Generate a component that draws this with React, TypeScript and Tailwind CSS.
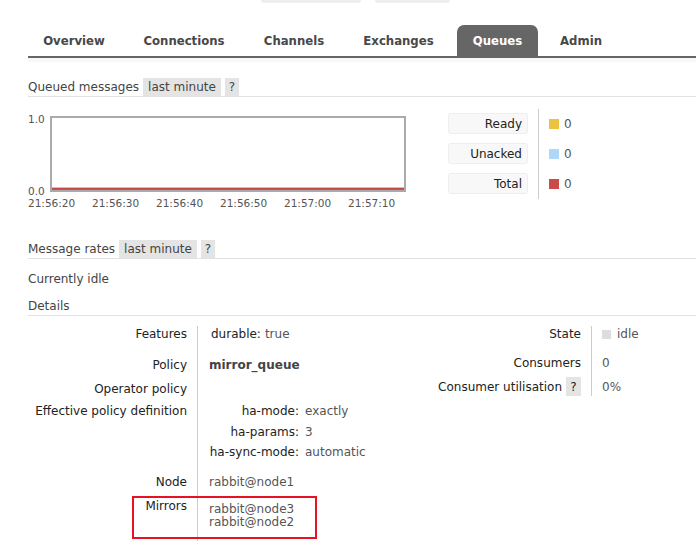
import React from 'react';

// Tabs across the top of the management UI
const tabs = [
  { label: 'Overview', width: 'w-[92px]' },
  { label: 'Connections', width: 'w-[114px]' },
  { label: 'Channels', width: 'w-[92px]' },
  { label: 'Exchanges', width: 'w-[103px]' },
  { label: 'Queues', width: 'w-[81px]', active: true },
  { label: 'Admin', width: 'w-[72px]' },
];

const timeLabels = ['21:56:20', '21:56:30', '21:56:40', '21:56:50', '21:57:00', '21:57:10'];

const legend = [
  { label: 'Ready', color: 'bg-[#edc240]', value: '0' },
  { label: 'Unacked', color: 'bg-[#afd8f8]', value: '0' },
  { label: 'Total', color: 'bg-[#cb4b4b]', value: '0' },
];

const policyDef = [
  { key: 'ha-mode:', value: 'exactly', h: 'h-[21px]' },
  { key: 'ha-params:', value: '3', h: 'h-[20px]' },
  { key: 'ha-sync-mode:', value: 'automatic', h: 'h-[20px]' },
];

const SectionHeader: React.FC<{ title: string }> = ({ title }) => (
  <div className="ml-[28px] flex h-[19px] items-start border-b border-[#e2e2e2]">
    <span className="leading-[18px] text-[#444]">{title}</span>
    <span className="ml-[4px] flex h-[18px] items-center bg-[#e4e4e4] px-[5px] text-[#444]">last minute</span>
    <span className="ml-[4px] flex h-[18px] w-[14px] items-center justify-center bg-[#e4e4e4] text-[#444]">?</span>
  </div>
);

const App: React.FC = () => {
  return (
    <div className="relative h-[552px] w-[696px] overflow-hidden bg-white font-['DejaVu_Sans',sans-serif] text-[12px] text-[#222]">
      {/* bottom edges of the buttons above the fold */}
      <div className="flex h-[3px]">
        <div className="ml-[261px] w-[100px] rounded-b-[4px] bg-[#eeeeee]" />
        <div className="ml-[14px] w-[75px] rounded-b-[4px] bg-[#eeeeee]" />
      </div>

      {/* Menu */}
      <div className="ml-[28px] mt-[22px] flex h-[33px] items-end border-b-2 border-[#666]">
        {tabs.map((t, i) => (
          <div
            key={t.label}
            className={`flex h-[31px] items-center justify-center rounded-t-[7px] font-['DejaVu_Sans_Condensed','DejaVu_Sans',sans-serif] text-[13px] font-bold [font-stretch:condensed] ${t.width} ${i > 0 ? 'ml-[7px]' : ''} ${t.active ? 'bg-[#666] text-white' : 'text-[#484848]'}`}
          >
            {t.label}
          </div>
        ))}
      </div>
      <div className="ml-[28px] h-[4px] bg-[#f8f8f8]" />

      {/* Queued messages */}
      <div className="mt-[16px]">
        <SectionHeader title="Queued messages" />
      </div>

      <div className="ml-[28px] mt-[12px] flex h-[101px] items-start">
        {/* chart */}
        <div className="mt-[4px] w-[378px] flex-none">
          <div className="flex">
            <div className="flex h-[84px] w-[22px] flex-col justify-between text-[10.5px] leading-[12px] text-[#545454]">
              <span>1.0</span>
              <span>0.0</span>
            </div>
            <div className="mt-[3px] flex h-[76px] w-[356px] flex-col justify-end border-2 border-[#aaa]">
              <div className="h-[1px] bg-[#e6b3b3]" />
              <div className="h-[2px] bg-[#cb4b4b]" />
            </div>
          </div>
          <div className="flex text-[10.5px] leading-[13px] text-[#545454]">
            {timeLabels.map(l => (
              <span key={l} className="w-[64px] flex-none">{l}</span>
            ))}
          </div>
        </div>

        {/* legend */}
        <div className="ml-[42px] flex h-[90px]">
          <div className="flex flex-col gap-[9px] border-r border-[#ccc] pr-[10px] pt-[4px]">
            {legend.map(l => (
              <div
                key={l.label}
                className="flex h-[21px] w-[80px] items-center justify-end rounded-[3px] border border-[#eeeeee] bg-[#f8f8f8] pr-[5px]"
              >
                {l.label}
              </div>
            ))}
          </div>
          <div className="flex flex-col gap-[9px] pl-[10px] pt-[4px]">
            {legend.map(l => (
              <div key={l.label} className="flex h-[21px] items-center text-[#555]">
                <span className={`h-[10px] w-[10px] ${l.color}`} />
                <span className="ml-[5px]">{l.value}</span>
              </div>
            ))}
          </div>
        </div>
      </div>

      {/* Message rates */}
      <div className="mt-[30px]">
        <SectionHeader title="Message rates" />
      </div>
      <div className="ml-[28px] mt-[12px] leading-[16px] text-[#444]">Currently idle</div>
      <div className="ml-[28px] mt-[11px] border-b border-[#e2e2e2] pb-[1px] leading-[16px] text-[#444]">Details</div>

      {/* Details tables */}
      <div className="ml-[28px] mt-[10px] flex items-start">
        <div className="w-[400px] flex-none">
          <div className="flex h-[31px]">
            <div className="w-[170px] border-r border-[#ccc] pr-[10px] text-right leading-[16px]">Features</div>
            <div className="pl-[13px] leading-[16px]">
              durable:<span className="ml-[4px] text-[#555]">true</span>
            </div>
          </div>
          <div className="flex h-[24px]">
            <div className="w-[170px] border-r border-[#ccc] pr-[10px] text-right leading-[16px]">Policy</div>
            <div className="pl-[11px] font-bold leading-[16px] text-[#444]">mirror_queue</div>
          </div>
          <div className="flex h-[22px]">
            <div className="w-[170px] border-r border-[#ccc] pr-[10px] text-right leading-[16px]">Operator policy</div>
          </div>
          <div className="flex h-[71px]">
            <div className="w-[170px] border-r border-[#ccc] pr-[10px] text-right leading-[16px]">Effective policy definition</div>
            <div className="pl-[11px] leading-[16px]">
              {policyDef.map(p => (
                <div key={p.key} className={`flex whitespace-nowrap ${p.h}`}>
                  <span className="w-[90px] text-right">{p.key}</span>
                  <span className="ml-[6px] text-[#555]">{p.value}</span>
                </div>
              ))}
            </div>
          </div>
          <div className="flex h-[24px]">
            <div className="w-[170px] border-r border-[#ccc] pr-[10px] text-right leading-[16px]">Node</div>
            <div className="pl-[11px] leading-[16px] text-[#555]">rabbit@node1</div>
          </div>
          <div className="flex h-[43px]">
            <div className="w-[170px] border-r border-[#ccc] pr-[10px] text-right leading-[16px]">Mirrors</div>
            <div className="pl-[11px] pt-[5px] leading-[13px] text-[#555]">
              <div>rabbit@node3</div>
              <div>rabbit@node2</div>
            </div>
          </div>
        </div>

        <div className="flex-none">
          <div className="flex h-[29px]">
            <div className="w-[164px] border-r border-[#ccc] pr-[10px] text-right leading-[16px]">State</div>
            <div className="flex h-[16px] items-center pl-[10px] text-[#555]">
              <span className="h-[9px] w-[9px] bg-[#dddddd]" />
              <span className="ml-[6px]">idle</span>
            </div>
          </div>
          <div className="flex h-[22px]">
            <div className="w-[164px] border-r border-[#ccc] pr-[10px] text-right leading-[16px]">Consumers</div>
            <div className="pl-[10px] leading-[16px] text-[#555]">0</div>
          </div>
          <div className="flex h-[27px]">
            <div className="flex h-[19px] w-[164px] items-center justify-end border-r border-[#ccc] pr-[10px]">
              Consumer utilisation
              <span className="ml-[4px] flex h-[19px] w-[15px] items-center justify-center bg-[#e4e4e4]">?</span>
            </div>
            <div className="flex h-[19px] items-center pl-[10px] text-[#555]">0%</div>
          </div>
        </div>
      </div>

      {/* highlight around Mirrors */}
      <div className="absolute left-[132px] top-[496px] h-[43px] w-[185px] border-2 border-[#e81123]" />
    </div>
  );
};

export default App;
